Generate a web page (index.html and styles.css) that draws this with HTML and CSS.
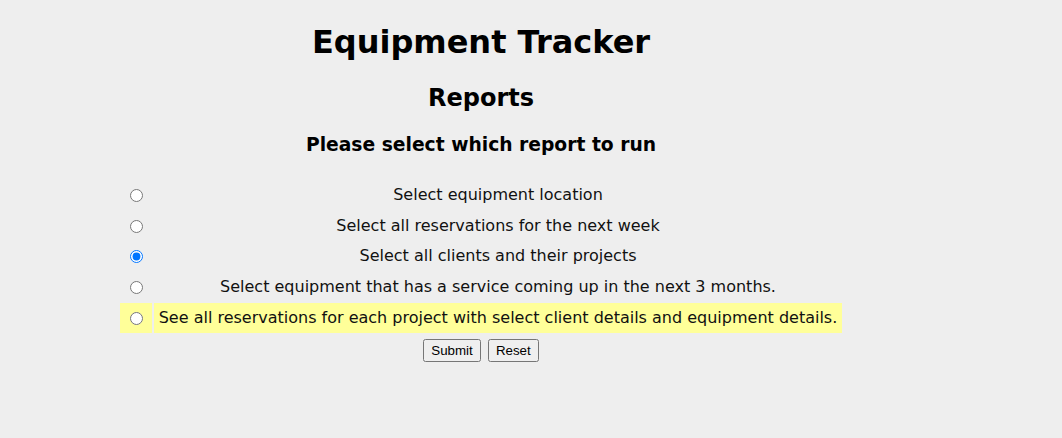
FILE: index.html
```html
<!DOCTYPE html>
<html>
<head>
<meta charset="utf-8">
<title>Equipment Tracker</title>
<link rel="stylesheet" href="styles.css">
</head>
<body>
<div class="page">
  <h1 class="title">Equipment Tracker</h1>
  <h2 class="subtitle">Reports</h2>
  <h3 class="prompt">Please select which report to run</h3>
  <form class="report-form">
    <table class="reports">
      <tr>
        <td class="radio-cell"><input type="radio" name="report" value="1"></td>
        <td class="label-cell">Select equipment location</td>
      </tr>
      <tr>
        <td class="radio-cell"><input type="radio" name="report" value="2"></td>
        <td class="label-cell">Select all reservations for the next week</td>
      </tr>
      <tr>
        <td class="radio-cell"><input type="radio" name="report" value="3" checked></td>
        <td class="label-cell">Select all clients and their projects</td>
      </tr>
      <tr>
        <td class="radio-cell"><input type="radio" name="report" value="4"></td>
        <td class="label-cell">Select equipment that has a service coming up in the next 3 months.</td>
      </tr>
      <tr class="highlight">
        <td class="radio-cell"><input type="radio" name="report" value="5"></td>
        <td class="label-cell">See all reservations for each project with select client details and equipment details.</td>
      </tr>
    </table>
    <div class="buttons">
      <button type="submit" class="btn">Submit</button>
      <button type="reset" class="btn">Reset</button>
    </div>
  </form>
</div>
</body>
</html>
```

FILE: styles.css
```css
html, body {
  background: #eeeeee;
}
body {
  margin: 8px;
  font-family: "DejaVu Sans", Verdana, sans-serif;
  color: #000;
}
.page {
  width: 946px;
  text-align: center;
}
.title {
  font-size: 32px;
  font-weight: bold;
  margin: 15px 0 0;
  line-height: 38px;
}
.subtitle {
  font-size: 24px;
  font-weight: bold;
  margin: 23px 0 0;
  line-height: 28px;
}
.prompt {
  font-size: 18.72px;
  font-weight: bold;
  margin: 22px 0 0;
  line-height: 22px;
}
.report-form {
  margin-top: 23px;
}
.reports {
  margin: 0 auto;
  border-spacing: 2px;
  font-size: 16px;
  color: #111;
}
.reports td {
  padding: 5px;
  line-height: 18.5px;
}
.radio-cell {
  width: 22px;
  text-align: center;
}
.radio-cell input {
  margin: 0 0 0 1px;
  vertical-align: middle;
}
.label-cell {
  text-align: center;
}
.highlight td {
  background: #ffff99;
  padding-top: 6px;
}
.buttons {
  margin-top: 4px;
}
.btn {
  font-family: "Liberation Sans", Arial, sans-serif;
  font-size: 13.33px;
  padding: 2px 6px;
  margin: 0 1px;
}
```
